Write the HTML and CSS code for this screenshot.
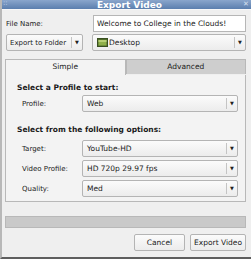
FILE: index.html
```html
<!DOCTYPE html>
<html lang="en">
<head>
    <meta charset="UTF-8">
    <title>Export Video</title>
    <link rel="stylesheet" href="styles.css">
</head>
<body>
    <div class="window">
        <div class="titlebar">
            <span class="grip">::</span>
            <span class="title">Export Video</span>
            <span class="close">&#x2715;</span>
        </div>

        <div class="dialog">
            <div class="row">
                <label class="lbl">File Name:</label>
                <div class="entry">Welcome to College in the Clouds!</div>
            </div>

            <div class="row">
                <div class="combo small">
                    <span class="combo-text">Export to Folder</span>
                    <span class="arrow">&#9660;</span>
                </div>
                <div class="combo wide">
                    <span class="combo-text">
                        <svg class="folder" width="11" height="9" viewBox="0 0 11 9">
                            <rect x="0.5" y="0.5" width="10" height="8" fill="#4d6b2a" stroke="#3a4f20"/>
                            <rect x="1.5" y="2" width="8" height="5.5" fill="#8fb04a"/>
                            <rect x="1.5" y="2" width="8" height="2" fill="#b7cf74"/>
                        </svg>
                        Desktop
                    </span>
                    <span class="arrow">&#9660;</span>
                </div>
            </div>

            <!-- tabs -->
            <div class="tabs">
                <div class="tab active">Simple</div>
                <div class="tab">Advanced</div>
            </div>

            <div class="panel">
                <h3>Select a Profile to start:</h3>
                <div class="field">
                    <span class="field-lbl">Profile:</span>
                    <div class="combo field-combo">
                        <span class="combo-text">Web</span>
                        <span class="arrow">&#9660;</span>
                    </div>
                </div>

                <h3 class="second">Select from the following options:</h3>
                <div class="field">
                    <span class="field-lbl">Target:</span>
                    <div class="combo field-combo">
                        <span class="combo-text">YouTube-HD</span>
                        <span class="arrow">&#9660;</span>
                    </div>
                </div>
                <div class="field">
                    <span class="field-lbl">Video Profile:</span>
                    <div class="combo field-combo">
                        <span class="combo-text">HD 720p 29.97 fps</span>
                        <span class="arrow">&#9660;</span>
                    </div>
                </div>
                <div class="field">
                    <span class="field-lbl">Quality:</span>
                    <div class="combo field-combo">
                        <span class="combo-text">Med</span>
                        <span class="arrow">&#9660;</span>
                    </div>
                </div>
            </div>

            <div class="progress"></div>

            <div class="buttons">
                <button class="btn cancel">Cancel</button>
                <button class="btn export">Export Video</button>
            </div>
        </div>
    </div>
</body>
</html>
```

FILE: styles.css
```css
body {
    margin: 0;
    font-family: "DejaVu Sans", Verdana, sans-serif;
    font-size: 7.5px;
    color: #1a1a1a;
    background: #ececec;
}

.window {
    width: 251px;
    height: 259px;
    box-sizing: border-box;
    border-left: 2px solid #b8b8b8;
    border-bottom: 2px solid #5e5e5e;
    background: #efefef;
    overflow: hidden;
}

.titlebar {
    height: 9px;
    display: flex;
    align-items: flex-end;
    justify-content: space-between;
    background: linear-gradient(#8aa6cc, #5b7eae);
    border-bottom: 1px solid #f8f8f8;
    color: white;
    overflow: hidden;
}

.title {
    font-weight: bold;
    font-size: 9px;
    line-height: 9px;
    margin-bottom: -1px;
    margin-left: 8px;
}

.grip {
    font-size: 7px;
    line-height: 7px;
    color: #c8d6ea;
    padding-left: 1px;
    margin-bottom: 2px;
}

.close {
    font-size: 7px;
    line-height: 8px;
    color: #d4dfee;
    padding-right: 2px;
    margin-bottom: 1px;
}

.dialog {
    padding: 5px 5px 0 2px;
}

.row {
    display: flex;
    align-items: center;
    margin-bottom: 2px;
}

.lbl {
    width: 87px;
    padding-left: 2px;
    font-size: 7px;
}

.entry {
    flex: 1;
    height: 15px;
    line-height: 15px;
    padding-left: 3px;
    background: white;
    border: 1px solid #b6b6b6;
}

.combo {
    display: flex;
    align-items: center;
    height: 15px;
    border: 1px solid #b4b4b4;
    border-radius: 2px;
    background: linear-gradient(#fbfbfb, #ececec);
}

.combo-text {
    flex: 1;
    display: flex;
    align-items: center;
    padding-left: 4px;
    white-space: nowrap;
    overflow: hidden;
}

.arrow {
    width: 10px;
    height: 11px;
    line-height: 11px;
    border-left: 1px solid #c4c4c4;
    font-size: 5px;
    text-align: center;
    color: #222;
}

.small {
    width: 75px;
    margin-left: 2px;
    font-size: 7px;
}

.small .combo-text {
    padding-left: 3px;
}

.wide {
    flex: 1;
    margin-left: 9px;
}

.folder {
    margin-right: 1px;
}

.tabs {
    display: flex;
    margin-top: 8px;
    padding: 0 0 0 1px;
}

.tab {
    flex: 1;
    height: 14px;
    line-height: 14px;
    text-align: center;
    border: 1px solid #b8b8b8;
    border-bottom: none;
    background: #cecece;
}

.tab.active {
    background: #f3f3f3;
    height: 15px;
}

.panel {
    height: 127px;
    margin: 0 0 0 1px;
    padding: 8px 7px 0 11px;
    background: #f3f3f3;
    border: 1px solid #b8b8b8;
    border-top: none;
    box-sizing: border-box;
}

h3 {
    margin: 0 0 3px 0;
    font-size: 7.5px;
    line-height: 9px;
    font-weight: bold;
}

h3.second {
    margin-top: 13px;
    margin-bottom: 6px;
}

.field {
    display: flex;
    align-items: center;
    margin-bottom: 3px;
}

.field-lbl {
    width: 60px;
    padding-left: 5px;
    font-size: 7px;
}

.field-combo {
    flex: 1;
}

.progress {
    height: 10px;
    margin: 14px 0 0 1px;
    background: #c9c9c9;
    border: 1px solid #b8b8b8;
}

.buttons {
    display: flex;
    justify-content: flex-end;
    gap: 5px;
    margin-top: 6px;
}

.btn {
    height: 17px;
    padding: 0;
    font-family: "DejaVu Sans", Verdana, sans-serif;
    font-size: 7.5px;
    color: #1a1a1a;
    border: 1px solid #b4b4b4;
    border-radius: 2px;
    background: linear-gradient(#fbfbfb, #ececec);
}

.cancel {
    width: 51px;
}

.export {
    width: 56px;
}
```
